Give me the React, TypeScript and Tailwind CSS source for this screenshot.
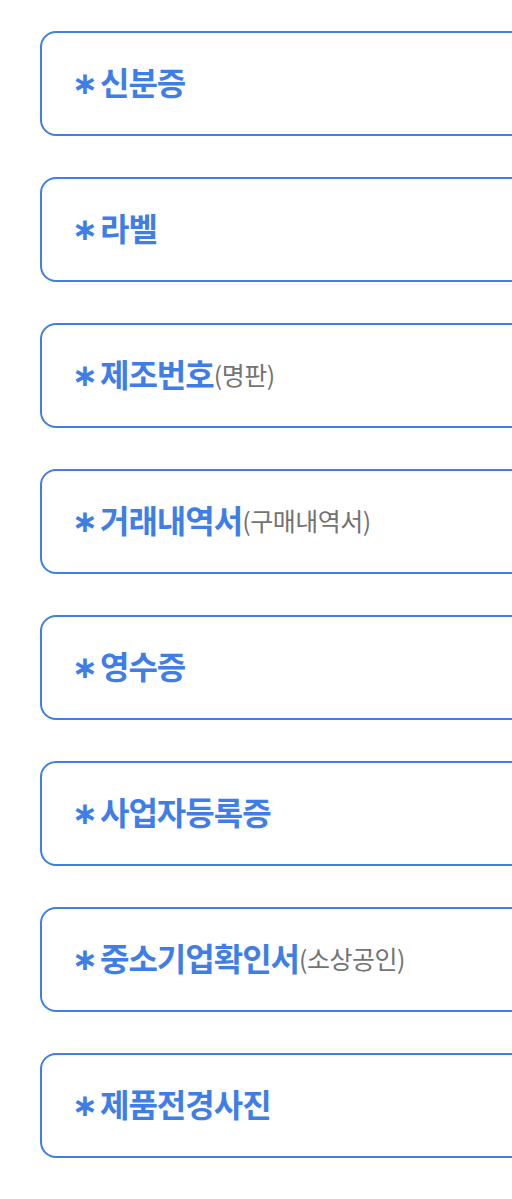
import React from "react";

const items: { main: string; sub?: string }[] = [
  { main: "신분증" },
  { main: "라벨" },
  { main: "제조번호", sub: "(명판)" },
  { main: "거래내역서", sub: "(구매내역서)" },
  { main: "영수증" },
  { main: "사업자등록증" },
  { main: "중소기업확인서", sub: "(소상공인)" },
  { main: "제품전경사진" },
];

export default function App() {
  return (
    <div
      className="w-[512px] h-[1199px] overflow-hidden bg-white pt-[31px] pl-[40px]"
      style={{ fontFamily: '"Noto Sans CJK KR", "Noto Sans", sans-serif' }}
    >
      <div className="flex flex-col gap-[41px]">
        {items.map((it) => (
          <div
            key={it.main}
            className="w-[520px] h-[105px] shrink-0 border-2 border-[#3f7ee6] rounded-[16px] flex items-center pl-[30px]"
          >
            <div className="flex items-center -translate-y-[3px]">
              <span
                className="text-[#3f7ee6] text-[31px] font-bold leading-none mr-[2px] translate-y-[3px]"
                style={{ fontFamily: '"DejaVu Sans", sans-serif' }}
              >
                ∗
              </span>
              <span className="text-[#3f7ee6] text-[32px] font-bold tracking-[-1px] leading-none">{it.main}</span>
              {it.sub && (
                <span className="text-[#737373] text-[25px] leading-none tracking-[-0.5px] translate-y-[2px]">{it.sub}</span>
              )}
            </div>
          </div>
        ))}
      </div>
    </div>
  );
}
